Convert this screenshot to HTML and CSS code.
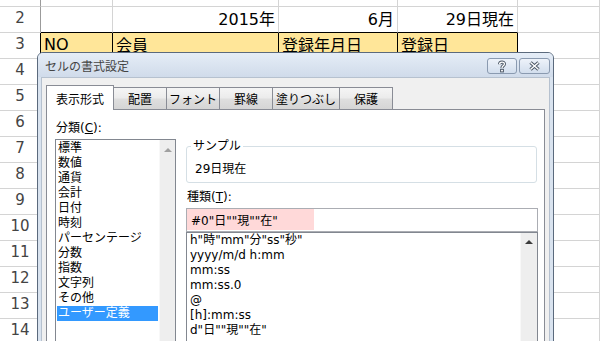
FILE: index.html
```html
<!DOCTYPE html>
<html lang="ja">
<head>
  <meta charset="UTF-8">
  <title>セルの書式設定</title>
  <link rel="stylesheet" href="styles.css">
</head>
<body>
  <!-- シート -->
  <div class="sheet">
    <div class="row first"><div class="hdr"></div><div></div><div></div><div></div><div></div><div></div></div>
    <div class="row">
      <div class="hdr">2</div>
      <div class="edge"></div>
      <div class="edge num">2015年</div>
      <div class="edge num">6月</div>
      <div class="edge num">29日現在</div>
      <div></div>
    </div>
    <div class="row">
      <div class="hdr dark">3</div>
      <div class="head">NO</div>
      <div class="head">会員</div>
      <div class="head">登録年月日</div>
      <div class="head">登録日</div>
      <div></div>
    </div>
    <div class="row"><div class="hdr">4</div><div></div><div></div><div></div><div></div><div></div></div>
    <div class="row"><div class="hdr">5</div><div></div><div></div><div></div><div></div><div></div></div>
    <div class="row"><div class="hdr">6</div><div></div><div></div><div></div><div></div><div></div></div>
    <div class="row"><div class="hdr">7</div><div></div><div></div><div></div><div></div><div></div></div>
    <div class="row"><div class="hdr">8</div><div></div><div></div><div></div><div></div><div></div></div>
    <div class="row"><div class="hdr">9</div><div></div><div></div><div></div><div></div><div></div></div>
    <div class="row"><div class="hdr">10</div><div></div><div></div><div></div><div></div><div></div></div>
    <div class="row"><div class="hdr">11</div><div></div><div></div><div></div><div></div><div></div></div>
    <div class="row"><div class="hdr">12</div><div></div><div></div><div></div><div></div><div></div></div>
    <div class="row"><div class="hdr">13</div><div></div><div></div><div></div><div></div><div></div></div>
    <div class="row"><div class="hdr">14</div><div></div><div></div><div></div><div></div><div></div></div>
  </div>

  <!-- ダイアログ -->
  <div class="dialog">
    <div class="titlebar">
      <span class="title">セルの書式設定</span>
      <span class="tb-btn">
        <svg width="10" height="13" viewBox="0 0 10 13">
          <path d="M2.6 4.2 C2.6 1.4 7.4 1.4 7.4 4 C7.4 5.9 5 5.8 5 8" fill="none" stroke="#4d5866" stroke-width="3.2"/>
          <path d="M2.6 4.2 C2.6 1.4 7.4 1.4 7.4 4 C7.4 5.9 5 5.8 5 8" fill="none" stroke="#fff" stroke-width="1.3"/>
          <rect x="3.6" y="9.3" width="2.8" height="2.6" fill="#fff" stroke="#4d5866" stroke-width="1"/>
        </svg>
      </span>
      <span class="tb-btn close">
        <svg width="13" height="10" viewBox="0 0 13 10">
          <path d="M2.5 1.5 L10.5 8.5 M10.5 1.5 L2.5 8.5" stroke="#4d5866" stroke-width="3.4"/>
          <path d="M2.5 1.5 L10.5 8.5 M10.5 1.5 L2.5 8.5" stroke="#fff" stroke-width="1.4"/>
        </svg>
      </span>
    </div>
    <div class="frame">
      <div class="dlg-body">
        <div class="tabs">
          <div class="tab wide active">表示形式</div>
          <div class="tab">配置</div>
          <div class="tab">フォント</div>
          <div class="tab">罫線</div>
          <div class="tab wide">塗りつぶし</div>
          <div class="tab">保護</div>
        </div>
        <div class="panel">
          <div class="left">
            <div class="lbl">分類(<u>C</u>):</div>
            <div class="listbox">
              <div class="items">
                <div class="item">標準</div>
                <div class="item">数値</div>
                <div class="item">通貨</div>
                <div class="item">会計</div>
                <div class="item">日付</div>
                <div class="item">時刻</div>
                <div class="item">パーセンテージ</div>
                <div class="item">分数</div>
                <div class="item">指数</div>
                <div class="item">文字列</div>
                <div class="item">その他</div>
                <div class="item selected">ユーザー定義</div>
              </div>
              <div class="scroll"><span class="arrow light"></span></div>
            </div>
          </div>
          <div class="right">
            <fieldset class="sample">
              <legend>サンプル</legend>
              <div class="sample-text">29日現在</div>
            </fieldset>
            <div class="lbl2">種類(<u>T</u>):</div>
            <div class="input"><span class="mark">#0"日""現""在"</span></div>
            <div class="listbox formats">
              <div class="items">
                <div class="item">h"時"mm"分"ss"秒"</div>
                <div class="item">yyyy/m/d h:mm</div>
                <div class="item">mm:ss</div>
                <div class="item">mm:ss.0</div>
                <div class="item">@</div>
                <div class="item">[h]:mm:ss</div>
                <div class="item">d"日""現""在"</div>
              </div>
              <div class="scroll"><span class="arrow"></span></div>
            </div>
          </div>
        </div>
      </div>
    </div>
  </div>
</body>
</html>
```

FILE: styles.css
```css
* {
  box-sizing: border-box;
}
body {
  margin: 0;
  width: 600px;
  height: 341px;
  overflow: hidden;
  position: relative;
  background: #fff;
  font-family: "DejaVu Sans", "Noto Sans CJK JP", sans-serif;
}

/* シート */
.row {
  display: grid;
  grid-template-columns: 41px 72px 166px 119px 120px 1fr;
  height: 26px;
}
.row.first {
  height: 7px;
}
.row > div {
  border-right: 1px solid #d4d4d4;
  border-bottom: 1px solid #d4d4d4;
  display: flex;
  align-items: center;
  padding: 0 3px 3px;
  font-size: 16px;
  color: #000;
  white-space: nowrap;
  overflow: hidden;
}
.row > .hdr {
  justify-content: center;
  padding: 0 0 3px;
  font-size: 15px;
  color: #444;
  border-right-color: #9b9b9b;
}
.row > .hdr.dark {
  border-right-color: #000;
}
.row > .num {
  justify-content: flex-end;
}
.row > .edge {
  border-bottom-color: #000;
}
.row > .head {
  background: #ffe699;
  border-right-color: #000;
  border-bottom-color: #000;
}

/* ダイアログ */
.dialog {
  position: absolute;
  left: 37px;
  top: 52px;
  width: 517px;
  height: 300px;
  border: 1px solid #5b6a7d;
  border-radius: 6px 6px 0 0;
  background: #d9e3ef;
  font-family: "DejaVu Sans", "Noto Sans CJK JP", sans-serif;
  font-size: 12px;
  color: #000;
  z-index: 5;
}
.titlebar {
  height: 24px;
  display: flex;
  align-items: center;
  padding: 0 3px 0 7px;
  border-radius: 5px 5px 0 0;
  background: linear-gradient(#e5edf7, #d0dbea);
}
.title {
  flex: 1;
  color: #444;
  font-family: "Noto Sans CJK JP", sans-serif;
  font-size: 12px;
  margin-top: 1px;
}
.tb-btn {
  width: 30px;
  height: 16px;
  margin-top: 2px;
  display: flex;
  align-items: center;
  justify-content: center;
  border: 1px solid #8a9ab0;
  border-radius: 3px;
  background: linear-gradient(#eef3fa, #d2deed);
}
.tb-btn.close {
  width: 31px;
  margin-left: 2px;
}
.frame {
  height: 275px;
  padding: 0 3px;
}
.dlg-body {
  height: 100%;
  background: #f0f0f0;
  border: 1px solid #b6c1cf;
  border-bottom: none;
  padding: 7px 4px 0;
}

/* タブ */
.tabs {
  display: flex;
  align-items: flex-end;
  height: 25px;
  margin-bottom: -1px;
  position: relative;
  z-index: 1;
}
.tab {
  width: 54px;
  height: 23px;
  margin-left: -1px;
  display: flex;
  align-items: center;
  justify-content: center;
  border: 1px solid #898c95;
  background: linear-gradient(#f5f5f5 0%, #ececec 45%, #dedede 55%, #d5d5d5 100%);
  font-family: "Noto Sans CJK JP", sans-serif;
  white-space: nowrap;
}
.tab.wide {
  width: 68px;
}
.tab:first-child {
  margin-left: 0;
}
.tab.active {
  height: 25px;
  background: #fff;
  border-bottom: none;
  position: relative;
  z-index: 2;
}

.panel {
  height: 240px;
  display: flex;
  gap: 10px;
  padding: 11px 6px 0 8px;
  background: #fff;
  border: 1px solid #898c95;
}
.left {
  width: 121px;
}
.right {
  width: 352px;
  margin-top: 18px;
}
.lbl, .lbl2 {
  line-height: 15px;
  height: 15px;
  padding-left: 1px;
  white-space: nowrap;
}
.lbl u, .lbl2 u {
  font-family: "DejaVu Sans", sans-serif;
}

.listbox {
  margin-top: 3px;
  height: 220px;
  display: flex;
  border: 1px solid #828790;
  background: #fff;
}
.items {
  flex: 1;
  padding: 1px;
  overflow: hidden;
}
.item {
  height: 15px;
  line-height: 15px;
  padding-left: 1px;
  white-space: nowrap;
}
.item.selected {
  background: #3399ff;
  color: #fff;
}
.scroll {
  width: 16px;
  display: flex;
  justify-content: center;
  align-items: flex-start;
  padding-top: 8px;
  background: #eeeeee;
  border-left: 1px solid #f8f8f8;
}
.arrow {
  width: 0;
  height: 0;
  border-left: 4px solid transparent;
  border-right: 4px solid transparent;
  border-bottom: 4px solid #3c3c3c;
}
.arrow.light {
  border-bottom-color: #a0a0a0;
}

/* サンプル */
.sample {
  width: 351px;
  margin: 0;
  padding: 0 8px 5px;
  border: 1px solid #d5dfe5;
  border-radius: 3px;
}
.sample legend {
  padding: 0 2px;
  margin-left: -4px;
  line-height: 15px;
}
.sample-text {
  margin-top: 8px;
  line-height: 15px;
}
.lbl2 {
  margin-top: 7px;
}
.input {
  margin-top: 3px;
  height: 24px;
  border: 1px solid #abadb3;
  background: #fff;
}
.mark {
  display: flex;
  align-items: center;
  width: 127px;
  height: 21px;
  padding-left: 4px;
  background: #ffd9d9;
  white-space: nowrap;
}
.listbox.formats {
  margin-top: 0;
  height: 150px;
}
.formats .items {
  padding: 0 0 0 3px;
}
.formats .item {
  padding-left: 0;
}
.formats .scroll {
  width: 17px;
  padding-top: 7px;
}
```
